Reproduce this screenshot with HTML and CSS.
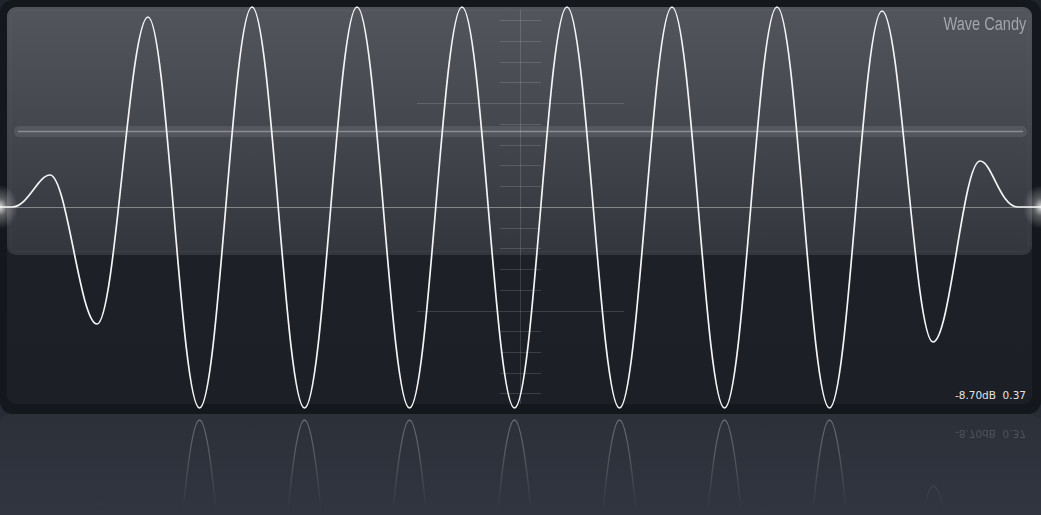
FILE: index.html
```html
<!DOCTYPE html>
<html>
<head>
<meta charset="utf-8">
<title>Wave Candy</title>
<link rel="stylesheet" href="styles.css">
</head>
<body>
<div class="stage">
  <div class="frame">
    <div class="panel">
      <div class="gloss">
        <div class="title">Wave Candy</div>
      </div>
      <div class="spacer"></div>
      <div class="readout">-8.70dB  0.37</div>
    </div>
    <svg class="scope" width="1041" height="414" viewBox="0 0 1041 414">
      <defs>
        <radialGradient id="glow">
          <stop offset="0" stop-color="#ffffff" stop-opacity="0.85"/>
          <stop offset="0.4" stop-color="#ffffff" stop-opacity="0.3"/>
          <stop offset="1" stop-color="#ffffff" stop-opacity="0"/>
        </radialGradient>
      </defs>
      <path class="grid" d="M520.5 10V404 M500 20.5H541 M500 41.5H541 M500 62.5H541 M500 82.5H541 M500 124.5H541 M500 145.5H541 M500 165.5H541 M500 186.5H541 M500 228.5H541 M500 248.5H541 M500 269.5H541 M500 290.5H541 M500 331.5H541 M500 352.5H541 M500 373.5H541 M500 393.5H541 M417 103.5H624 M417 311.5H624"/>
      <rect class="bar" x="14" y="126" width="1013" height="11" rx="5"/>
      <path class="bar-line" d="M18 131.5H1023"/>
      <path class="axis" d="M0 207.5H1041"/>
      <ellipse cx="0" cy="207" rx="18" ry="22" fill="url(#glow)"/>
      <ellipse cx="1041" cy="207" rx="18" ry="22" fill="url(#glow)"/>
      <path class="wave" d="M0 207H12C28 207 38 175 50 175C67 175 80 324 97 324C115.5 324 129.5 17 148 17C166.7 17 180.8 408 199.5 408C218.6 408 232.9 7 252 7C271.1 7 285.4 408 304.5 408C323.6 408 337.9 7 357 7C376.1 7 390.4 408 409.5 408C428.6 408 442.9 7 462 7C481.1 7 495.4 408 514.5 408C533.6 408 547.9 7 567 7C586.1 7 600.4 408 619.5 408C638.6 408 652.9 7 672 7C691.1 7 705.4 408 724.5 408C743.6 408 757.9 7 777 7C796.1 7 810.4 408 829.5 408C848.6 408 862.9 11 882 11C900.5 11 914.5 342 933 342C950 342 963 161 980 161C992 161 1000 207 1018 207H1041"/>
    </svg>
  </div>
  <div class="reflection">
    <svg class="mirror" width="1041" height="101" viewBox="0 0 1041 101">
      <defs>
        <linearGradient id="fade" gradientUnits="userSpaceOnUse" x1="0" y1="0" x2="0" y2="96">
          <stop offset="0" stop-color="#ffffff" stop-opacity="1"/>
          <stop offset="1" stop-color="#ffffff" stop-opacity="0"/>
        </linearGradient>
        <mask id="fademask">
          <rect x="0" y="0" width="1041" height="101" fill="url(#fade)"/>
        </mask>
      </defs>
      <g mask="url(#fademask)">
        <path class="wave-ghost" transform="matrix(1 0 0 -1 0 414)" d="M0 207H12C28 207 38 175 50 175C67 175 80 324 97 324C115.5 324 129.5 17 148 17C166.7 17 180.8 408 199.5 408C218.6 408 232.9 7 252 7C271.1 7 285.4 408 304.5 408C323.6 408 337.9 7 357 7C376.1 7 390.4 408 409.5 408C428.6 408 442.9 7 462 7C481.1 7 495.4 408 514.5 408C533.6 408 547.9 7 567 7C586.1 7 600.4 408 619.5 408C638.6 408 652.9 7 672 7C691.1 7 705.4 408 724.5 408C743.6 408 757.9 7 777 7C796.1 7 810.4 408 829.5 408C848.6 408 862.9 11 882 11C900.5 11 914.5 342 933 342C950 342 963 161 980 161C992 161 1000 207 1018 207H1041"/>
      </g>
    </svg>
    <div class="readout readout-ghost">-8.70dB  0.37</div>
  </div>
</div>
</body>
</html>
```

FILE: styles.css
```css
html, body {
  margin: 0;
  padding: 0;
}

body {
  width: 1041px;
  height: 515px;
  overflow: hidden;
  background: #2b3039;
}

.stage {
  width: 1041px;
  height: 515px;
  display: flex;
  flex-direction: column;
  background: linear-gradient(#20242b 0, #272b33 414px, #2a2e37 420px, #31353f 515px);
}

.frame {
  position: relative;
  flex: none;
  height: 414px;
  box-sizing: border-box;
  padding: 7px 9px 10px 7px;
  background: #14171c;
  border-radius: 13px;
  display: flex;
}

.panel {
  flex: 1;
  display: flex;
  flex-direction: column;
  background: linear-gradient(#1f2329, #1c1f25);
  border-radius: 9px;
  padding-bottom: 4px;
}

.gloss {
  position: relative;
  flex: none;
  height: 248px;
  box-sizing: border-box;
  padding: 8px 6px 0 0;
  border-radius: 9px;
  background: linear-gradient(#52555c, #45484f 45%, #33363d);
  display: flex;
  justify-content: flex-end;
  align-items: flex-start;
}

.gloss::before {
  content: "";
  position: absolute;
  inset: 3px;
  border-radius: 7px;
  border: 1px solid rgba(255, 255, 255, 0.035);
}

.title {
  font-family: "Liberation Sans", Arial, sans-serif;
  font-size: 18px;
  line-height: 1;
  color: #a3a6ab;
  transform: scaleX(0.81);
  transform-origin: right center;
}

.spacer {
  flex: 1;
}

.readout {
  align-self: flex-end;
  margin-right: 6px;
  font-family: "DejaVu Sans", sans-serif;
  font-size: 10.5px;
  line-height: 1;
  color: #e3e4e6;
  white-space: pre;
}

.scope {
  position: absolute;
  left: 0;
  top: 0;
  pointer-events: none;
}

.grid {
  fill: none;
  stroke: rgba(255, 255, 255, 0.14);
  stroke-width: 1;
}

.bar {
  fill: rgba(255, 255, 255, 0.09);
}

.bar-line {
  fill: none;
  stroke: rgba(255, 255, 255, 0.33);
  stroke-width: 1.5;
}

.axis {
  fill: none;
  stroke: rgba(255, 255, 255, 0.38);
  stroke-width: 1;
}

.wave {
  fill: none;
  stroke: #f4f4f4;
  stroke-width: 1.7;
}

.reflection {
  position: relative;
  flex: 1;
  display: flex;
  flex-direction: column;
  align-items: flex-end;
  padding: 14px 15px 0 0;
  border-radius: 12px 12px 0 0;
  background: linear-gradient(#2b3039, #31353f);
}

.mirror {
  position: absolute;
  left: 0;
  top: 0;
}

.wave-ghost {
  fill: none;
  stroke: rgba(255, 255, 255, 0.32);
  stroke-width: 1.4;
}

.readout-ghost {
  margin-right: 0;
  color: rgba(255, 255, 255, 0.16);
  transform: scaleY(-1);
}
```
